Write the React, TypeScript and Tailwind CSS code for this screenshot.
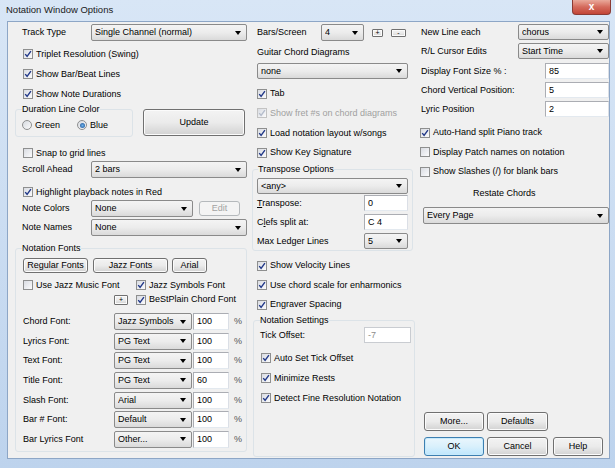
import React from 'react';

function Tri() {
  return <span className="w-0 h-0 shrink-0 border-x-[3.5px] border-x-transparent border-t-[4px] border-t-black" />;
}

function Select({ text, className = '' }: { text: string; className?: string }) {
  return (
    <div
      className={`flex items-center border border-[#8a8a8a] rounded-[2px] bg-linear-to-b from-[#f4f4f4] via-[#ececec] to-[#dadada] pl-[3px] pr-[5px] ${className}`}
    >
      <span className="flex-1 truncate">{text}</span>
      <Tri />
    </div>
  );
}

function Input({ value, className = '', disabled = false }: { value: string; className?: string; disabled?: boolean }) {
  return (
    <div
      className={`flex items-center bg-white border ${
        disabled ? 'border-[#c9ccd1] text-[#8d8d8d]' : 'border-[#abadb3] border-b-[#e3e9ef] border-r-[#dbdfe6]'
      } pl-[3px] ${className}`}
    >
      {value}
    </div>
  );
}

function Btn({
  children,
  className = '',
  disabled = false,
  focus = false,
  small = false,
}: {
  children: React.ReactNode;
  className?: string;
  disabled?: boolean;
  focus?: boolean;
  small?: boolean;
}) {
  const look = disabled
    ? 'border-[#b5b9bc] bg-[#f4f4f4] text-[#a3a3a3]'
    : focus
    ? 'border-[#3c7fb1] bg-linear-to-b from-[#eaf6fd] via-[#d9f0fc] to-[#bee6fd] shadow-[inset_0_0_0_1px_#c8eafb]'
    : 'border-[#707070] bg-linear-to-b from-[#f3f3f3] via-[#ebebeb] to-[#d2d2d2] shadow-[inset_0_0_0_1px_#fbfbfb]';
  return (
    <div
      className={`flex items-center justify-center border ${small ? 'rounded-[1px]' : 'rounded-[3px]'} shrink-0 ${look} ${className}`}
    >
      {children}
    </div>
  );
}

function Box({ checked = false, disabled = false }: { checked?: boolean; disabled?: boolean }) {
  return (
    <span
      className={`w-[10px] h-[10px] shrink-0 border ${
        disabled ? 'border-[#c3c3c3]' : 'border-[#8e8f8f]'
      } bg-linear-to-br from-[#d9dce2] to-[#fbfbfc] flex items-center justify-center`}
    >
      {checked && (
        <svg width="8" height="8" viewBox="0 0 8 8" className="block">
          <path
            d="M1.2 4.1L3.1 6.3L6.9 1.2"
            fill="none"
            stroke={disabled ? '#b4bccb' : '#213888'}
            strokeWidth="1.4"
          />
        </svg>
      )}
    </span>
  );
}

function Check({
  label,
  checked = false,
  disabled = false,
  className = '',
}: {
  label: React.ReactNode;
  checked?: boolean;
  disabled?: boolean;
  className?: string;
}) {
  return (
    <div className={`flex items-center ${className}`}>
      <Box checked={checked} disabled={disabled} />
      <span className={`ml-[3px] whitespace-nowrap ${disabled ? 'text-[#a0a0a0]' : ''}`}>{label}</span>
    </div>
  );
}

function Radio({ on = false }: { on?: boolean }) {
  return (
    <span className="w-[10px] h-[10px] shrink-0 rounded-full border border-[#8e8f8f] bg-linear-to-br from-[#d6dae0] to-[#fbfbfb] flex items-center justify-center">
      {on && <span className="w-[5px] h-[5px] rounded-full bg-radial from-[#6fb3ea] to-[#1b4f93]" />}
    </span>
  );
}

function FontRow({ label, font, pct }: { label: string; font: string; pct: string }) {
  return (
    <div className="flex items-center h-[17px]">
      <span className="w-[98px] pl-[7px] whitespace-nowrap">{label}</span>
      <Select text={font} className="w-[78px] h-[17px]" />
      <Input value={pct} className="ml-[1px] w-[36px] h-[17px]" />
      <span className="ml-[5px] text-[#555]">%</span>
    </div>
  );
}

export default function App() {
  return (
    <div className="w-[615px] h-[468px] flex flex-col bg-linear-to-b from-[#d8e6f6] to-[#bdd3ed] font-['Liberation_Sans',Arial,sans-serif] text-[9px] leading-none text-black overflow-hidden">
      {/* Title bar */}
      <div className="h-[21px] shrink-0 flex items-start">
        <span className="ml-[6px] mt-[5px] text-[9.5px] text-[#1a1a1a]">Notation Window Options</span>
        <div className="ml-auto mr-[4px] w-[39px] h-[15px] rounded-b-[4px] border border-t-0 border-[#8b3b34] bg-linear-to-b from-[#e9a99b] via-[#d46a5c] to-[#c24537] flex items-center justify-center">
          <span className="text-white font-bold text-[10px] leading-none -mt-[1px]">x</span>
        </div>
      </div>

      {/* Client area */}
      <div className="flex-1 flex pl-[7px] pr-[5px] pb-[9px]">
        <div className="flex-1 flex bg-[#f0f0f0] border border-[#8da6c6]">
          {/* Left column */}
          <div className="ml-[7px] w-[232px] flex flex-col pt-[2px]">
            <div className="flex items-center h-[17px]">
              <span className="w-[76px] pl-[7px]">Track Type</span>
              <Select text="Single Channel (normal)" className="w-[156px] h-[17px]" />
            </div>
            <div className="mt-[3px] pl-[8px] flex flex-col">
              <Check className="h-[20px]" checked label="Triplet Resolution (Swing)" />
              <Check className="h-[20px]" checked label="Show Bar/Beat Lines" />
              <Check className="h-[20px]" checked label="Show Note Durations" />
            </div>
            <div className="flex h-[34px]">
              <fieldset className="w-[118px] h-[33px] border border-[#dce3e8] rounded-[3px]">
                <legend className="ml-[6px] leading-[11px] px-0">Duration Line Color</legend>
                <div className="flex items-center h-[14px] mt-[3px] pl-[6px]">
                  <Radio />
                  <span className="ml-[3px]">Green</span>
                  <span className="ml-[17px]" />
                  <Radio on />
                  <span className="ml-[3px]">Blue</span>
                </div>
              </fieldset>
              <Btn className="ml-[10px] mt-[5px] w-[102px] h-[27px]">Update</Btn>
            </div>
            <Check className="mt-[7px] h-[16px] pl-[8px]" label="Snap to grid lines" />
            <div className="flex items-center h-[17px]">
              <span className="w-[76px] pl-[7px]">Scroll Ahead</span>
              <Select text="2 bars" className="w-[156px] h-[17px]" />
            </div>
            <Check className="mt-[6px] h-[16px] pl-[8px]" checked label="Highlight playback notes in Red" />
            <div className="flex items-center h-[17px]">
              <span className="w-[76px] pl-[7px]">Note Colors</span>
              <Select text="None" className="w-[102px] h-[17px]" />
              <Btn disabled className="ml-[6px] w-[41px] h-[15px]">
                Edit
              </Btn>
            </div>
            <div className="flex items-center h-[17px] mt-[2px]">
              <span className="w-[76px] pl-[7px]">Note Names</span>
              <Select text="None" className="w-[156px] h-[17px]" />
            </div>
            <fieldset className="mt-[7px] border border-[#dce3e8] rounded-[3px]">
              <legend className="ml-[6px] leading-[11px]">Notation Fonts</legend>
              <div className="flex mt-[4px] pl-[7px]">
                <Btn className="w-[65px] h-[15px]">Regular Fonts</Btn>
                <Btn className="ml-[5px] w-[75px] h-[15px]">Jazz Fonts</Btn>
                <Btn className="ml-[4px] w-[35px] h-[15px]">Arial</Btn>
              </div>
              <div className="flex items-center mt-[4px] h-[16px] pl-[7px]">
                <div className="w-[113px]">
                  <Check label="Use Jazz Music Font" />
                </div>
                <Check checked label="Jazz Symbols Font" />
              </div>
              <div className="flex items-center h-[13px]">
                <span className="w-[98px]" />
                <Btn small className="w-[14px] h-[10px] text-[7px]">+</Btn>
                <Check className="ml-[8px]" checked label="BeStPlain Chord Font" />
              </div>
              <div className="flex flex-col gap-[2.67px] mt-[7px] pb-[3px]">
                <FontRow label="Chord Font:" font="Jazz Symbols" pct="100" />
                <FontRow label="Lyrics Font:" font="PG Text" pct="100" />
                <FontRow label="Text Font:" font="PG Text" pct="100" />
                <FontRow label="Title Font:" font="PG Text" pct="60" />
                <FontRow label="Slash Font:" font="Arial" pct="100" />
                <FontRow label="Bar # Font:" font="Default" pct="100" />
                <FontRow label="Bar Lyrics Font" font="Other..." pct="100" />
              </div>
            </fieldset>
          </div>

          {/* Middle column */}
          <div className="ml-[5px] w-[163px] flex flex-col pt-[2px]">
            <div className="flex items-center h-[17px]">
              <span className="w-[69px] pl-[5px]">Bars/Screen</span>
              <Select text="4" className="w-[43px] h-[17px]" />
              <Btn small className="ml-[8px] w-[11px] h-[8px] text-[7px]">+</Btn>
              <Btn small className="ml-[8px] w-[15px] h-[8px] text-[7px]">-</Btn>
            </div>
            <div className="mt-[4px] h-[14px] pl-[5px] flex items-center">Guitar Chord Diagrams</div>
            <Select text="none" className="mt-[4px] ml-[5px] w-[151px] h-[16px]" />
            <div className="mt-[5px] pl-[5px] flex flex-col">
              <Check className="h-[19.67px]" checked label="Tab" />
              <Check className="h-[19.67px]" checked disabled label="Show fret #s on chord diagrams" />
              <Check className="h-[19.67px]" checked label="Load notation layout w/songs" />
              <Check className="h-[19.67px]" checked label="Show Key Signature" />
            </div>
            <fieldset className="mt-[1px] w-[161px] border border-[#dce3e8] rounded-[3px] pb-[1px]">
              <legend className="ml-[5px] leading-[11px]">Transpose Options</legend>
              <Select text="<any>" className="mt-[3.5px] ml-[4px] w-[151px] h-[16px]" />
              <div className="flex items-center mt-[1px] h-[16px]">
                <span className="w-[111px] pl-[4px]">
                  <span className="underline">T</span>ranspose:
                </span>
                <Input value="0" className="w-[44px] h-[16px]" />
              </div>
              <div className="flex items-center mt-[3px] h-[16px]">
                <span className="w-[111px] pl-[4px]">
                  C<span className="underline">l</span>efs split at:
                </span>
                <Input value="C 4" className="w-[44px] h-[16px]" />
              </div>
              <div className="flex items-center mt-[3px] h-[16px]">
                <span className="w-[111px] pl-[4px]">Max Ledger Lines</span>
                <Select text="5" className="w-[44px] h-[16px]" />
              </div>
            </fieldset>
            <div className="mt-[5px] pl-[5px] flex flex-col">
              <Check className="h-[19.5px]" checked label="Show Velocity Lines" />
              <Check className="h-[19.5px]" checked label="Use chord scale for enharmonics" />
              <Check className="h-[19.5px]" checked label="Engraver Spacing" />
            </div>
            <fieldset className="ml-[1px] w-[162px] flex-1 mb-[1px] border border-[#dce3e8] rounded-[3px]">
              <legend className="ml-[6px] leading-[11px]">Notation Settings</legend>
              <div className="flex items-center mt-[1.5px] h-[16px]">
                <span className="w-[110px] pl-[6px]">Tick Offset:</span>
                <Input disabled value="-7" className="w-[47px] h-[16px]" />
              </div>
              <div className="mt-[5px] pl-[7px] flex flex-col">
                <Check className="h-[20px]" checked label="Auto Set Tick Offset" />
                <Check className="h-[20px]" checked label="Minimize Rests" />
                <Check className="h-[20px]" checked label="Detect Fine Resolution Notation" />
              </div>
            </fieldset>
          </div>

          {/* Right column */}
          <div className="ml-[4px] flex-1 flex flex-col pt-[2px] pb-[2px]">
            <div className="flex items-center h-[16px]">
              <span className="w-[99px] pl-[2px]">New Line each</span>
              <Select text="chorus" className="flex-1 h-[16px]" />
            </div>
            <div className="flex items-center h-[16px] mt-[3px]">
              <span className="w-[99px] pl-[2px]">R/L Cursor Edits</span>
              <Select text="Start Time" className="flex-1 h-[16px]" />
            </div>
            <div className="flex items-center h-[16px] mt-[4px]">
              <span className="w-[126px] pl-[2px]">Display Font Size % :</span>
              <Input value="85" className="flex-1 h-[16px]" />
            </div>
            <div className="flex items-center h-[16px] mt-[3px]">
              <span className="w-[126px] pl-[2px]">Chord Vertical Position:</span>
              <Input value="5" className="flex-1 h-[16px]" />
            </div>
            <div className="flex items-center h-[16px] mt-[3px]">
              <span className="w-[126px] pl-[2px]">Lyric Position</span>
              <Input value="2" className="flex-1 h-[16px]" />
            </div>
            <div className="mt-[6px] pl-[1px] flex flex-col">
              <Check className="h-[19.5px]" checked label="Auto-Hand split Piano track" />
              <Check className="h-[19.5px]" label="Display Patch names on notation" />
              <Check className="h-[19.5px]" label="Show Slashes (/) for blank bars" />
            </div>
            <div className="mt-[4.5px] h-[14px] pl-[54px] flex items-center">Restate Chords</div>
            <Select text="Every Page" className="mt-[7px] ml-[4px] h-[17px]" />
            <div className="flex-1" />
            <div className="flex h-[19px]">
              <Btn className="ml-[5px] w-[60px] h-[19px]">More...</Btn>
              <Btn className="ml-[3px] w-[61px] h-[19px]">Defaults</Btn>
            </div>
            <div className="flex h-[19px] mt-[6px]">
              <Btn focus className="ml-[5px] w-[60px] h-[19px]">
                OK
              </Btn>
              <Btn className="ml-[3px] w-[61px] h-[19px]">Cancel</Btn>
              <Btn className="ml-[5px] w-[50px] h-[19px]">Help</Btn>
            </div>
          </div>
        </div>
      </div>
    </div>
  );
}
